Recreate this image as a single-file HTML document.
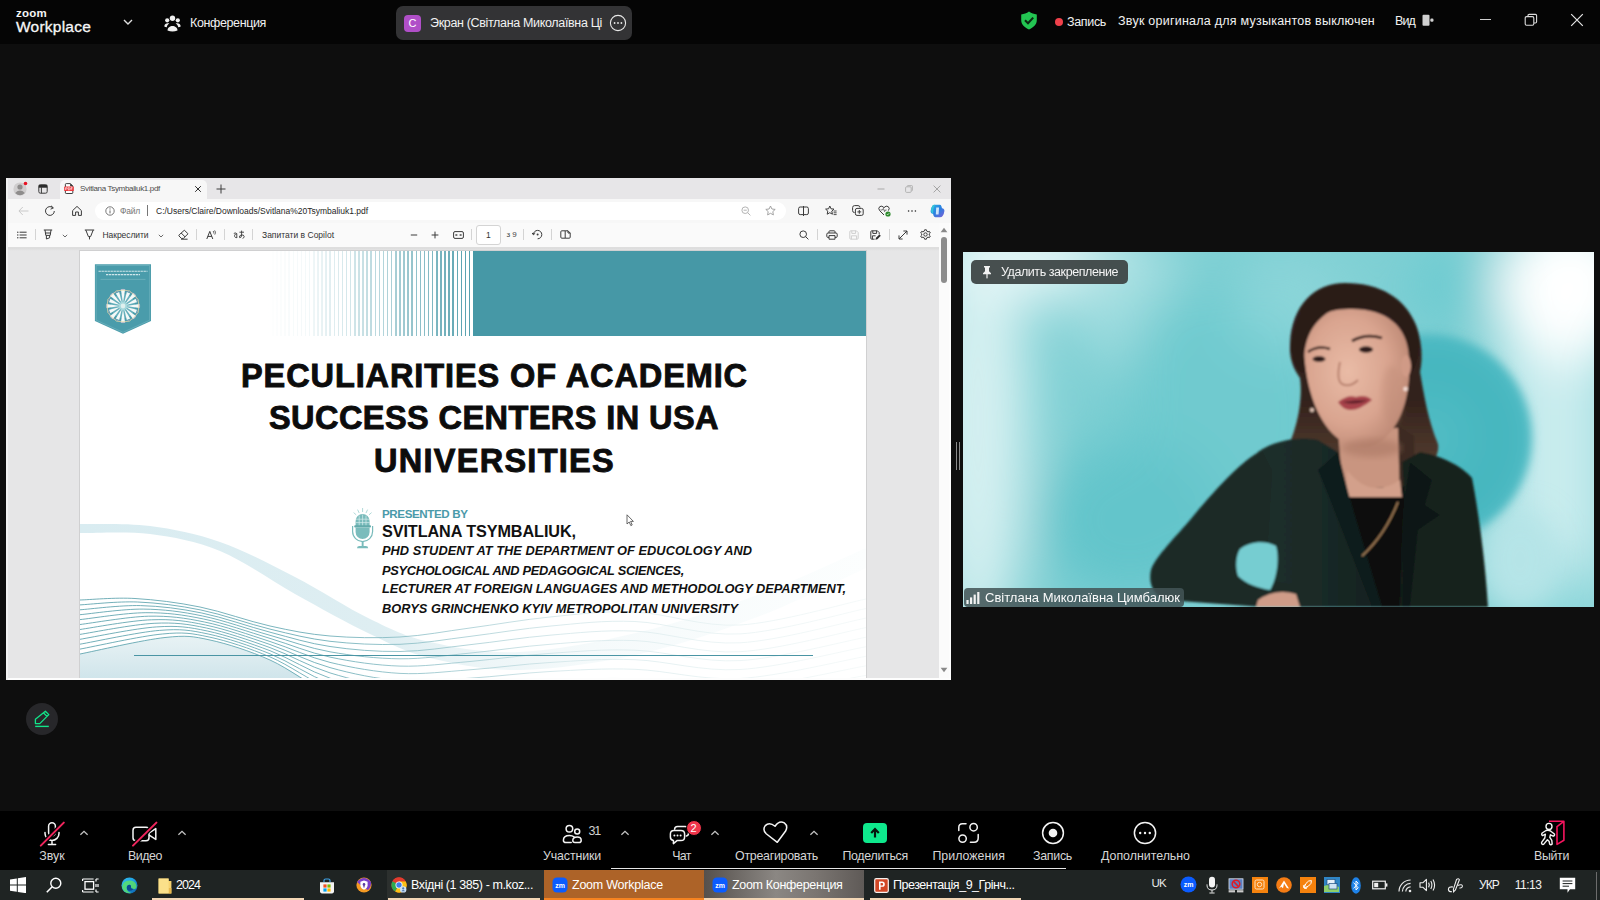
<!DOCTYPE html>
<html><head><meta charset="utf-8">
<style>
*{box-sizing:border-box;margin:0;padding:0}
html,body{width:1600px;height:900px;overflow:hidden;background:#0e0e0e;font-family:"Liberation Sans",sans-serif;color:#fff}
.abs{position:absolute}
#top{left:0;top:0;width:1600px;height:44px;background:#050505}
#top .t{position:absolute;font-size:12.5px;color:#f2f2f2;white-space:nowrap}
#tabpill{left:396px;top:6px;width:236px;height:34px;border-radius:7px;background:#333335}
#share{left:6px;top:178px;width:945px;height:502px;background:#e9e9ea;overflow:hidden}
#video{left:963px;top:252px;width:631px;height:355px;background:#7fd0d3;overflow:hidden}
#toolbar{left:0;top:811px;width:1600px;height:58px;background:#000}
#taskbar{left:0;top:869px;width:1600px;height:31px;background:#1f2423}
.lbl{position:absolute;font-size:12.4px;color:#d6d6d6;white-space:nowrap;transform:translateX(-50%);top:38px}
.tk{position:absolute;font-size:12.5px;color:#fff;white-space:nowrap;top:9px}
.bt{position:absolute;white-space:nowrap;letter-spacing:0}
.ttl{position:absolute;white-space:nowrap;font-size:32.5px;font-weight:bold;color:#0c0c0c;-webkit-text-stroke:0.9px #0c0c0c}
.bi{position:absolute;white-space:nowrap;font-size:12.8px;font-weight:bold;font-style:italic;color:#111}
</style></head><body>
<!--TOP-->
<div id="top" class="abs">
<div class="t" style="left:16px;top:6.6px;font-size:11.5px;font-weight:bold;color:#f5f5f5;letter-spacing:0.242px" id="zm">zoom</div>
<div class="t" style="left:16px;top:18px;font-size:15.5px;color:#f7f7f7;-webkit-text-stroke:0.3px #f7f7f7;letter-spacing:0.229px" id="wp">Workplace</div>
<svg class="abs" style="left:122px;top:17px" width="12" height="10" viewBox="0 0 12 10"><path d="M2 3 L6 7 L10 3" fill="none" stroke="#e0e0e0" stroke-width="1.4"/></svg>
<svg class="abs" style="left:164px;top:14px" width="17" height="18" viewBox="0 0 17 18"><g fill="#f0f0f0"><circle cx="8.5" cy="4.3" r="2.7"/><circle cx="3.2" cy="6.3" r="2.1"/><circle cx="13.8" cy="6.3" r="2.1"/><path d="M3.5 16.5 C3.5 10.5 13.5 10.5 13.5 16.5 Q8.5 18.3 3.5 16.5Z"/><path d="M0.3 12.6 C0.3 9 4 8.6 5.4 9.6 C3.6 10.6 2.9 12 2.8 13.3 Q1.2 13.3 0.3 12.6Z"/><path d="M16.7 12.6 C16.7 9 13 8.6 11.6 9.6 C13.4 10.6 14.1 12 14.2 13.3 Q15.8 13.3 16.7 12.6Z"/></g></svg>
<div class="t" style="left:190px;top:16px;letter-spacing:-0.372px" id="conf">Конференция</div>
<div id="tabpill" class="abs"></div>
<div class="abs" style="left:404px;top:15px;width:17px;height:17px;border-radius:4px;background:#b04fc8;color:#fff;font-size:11px;text-align:center;line-height:17px">C</div>
<div class="t" style="left:430px;top:16px;letter-spacing:-0.337px" id="ekr">Экран (Світлана Миколаївна Ці</div>
<svg class="abs" style="left:609px;top:14px" width="18" height="18" viewBox="0 0 18 18"><circle cx="9" cy="9" r="7.6" fill="none" stroke="#e8e8e8" stroke-width="1.1"/><circle cx="5.6" cy="9" r="0.9" fill="#e8e8e8"/><circle cx="9" cy="9" r="0.9" fill="#e8e8e8"/><circle cx="12.4" cy="9" r="0.9" fill="#e8e8e8"/></svg>
<svg class="abs" style="left:1020px;top:11px" width="18" height="19" viewBox="0 0 18 19"><path d="M9 0.6 C6.5 2.6 4 3.2 1.2 3.4 V9 C1.2 13.6 4.6 16.6 9 18.4 C13.4 16.6 16.8 13.6 16.8 9 V3.4 C14 3.2 11.5 2.6 9 0.6Z" fill="#23c552"/><path d="M5 9.2 L8 12.2 L13.2 6.6" fill="none" stroke="#0a2a12" stroke-width="2.1"/></svg>
<div class="abs" style="left:1055px;top:18px;width:8px;height:8px;border-radius:50%;background:#f0414b"></div>
<div class="t" style="left:1067px;top:15px;letter-spacing:-0.336px" id="zap">Запись</div>
<div class="t" style="left:1118px;top:14px;letter-spacing:0.240px" id="zvuk">Звук оригинала для музыкантов выключен</div>
<div class="t" style="left:1395px;top:14px;letter-spacing:-0.875px" id="vid">Вид</div>
<svg class="abs" style="left:1422px;top:13.5px" width="13" height="13" viewBox="0 0 13 13"><rect x="0.5" y="0.8" width="7" height="11" rx="1" fill="#d0d0d0"/><rect x="8.3" y="4.6" width="3.2" height="3.2" rx="1.2" fill="#d0d0d0"/></svg>
<div class="abs" style="left:1480px;top:19px;width:11px;height:1.4px;background:#cfcfcf"></div>
<svg class="abs" style="left:1524px;top:13px" width="14" height="14" viewBox="0 0 14 14"><rect x="1.2" y="3.6" width="8.6" height="8.6" rx="1.4" fill="none" stroke="#dcdcdc" stroke-width="1.1"/><path d="M4 3.4 V2.6 Q4 1.4 5.2 1.4 H11.4 Q12.6 1.4 12.6 2.6 V8.8 Q12.6 10 11.4 10 H10" fill="none" stroke="#dcdcdc" stroke-width="1.1"/></svg>
<svg class="abs" style="left:1570px;top:13px" width="14" height="14" viewBox="0 0 14 14"><path d="M1.2 1.2 L12.8 12.8 M12.8 1.2 L1.2 12.8" stroke="#e6e6e6" stroke-width="1.2"/></svg>
</div>
<!--SHARE-->
<div id="share" class="abs"><div class="abs" style="left:-6px;top:-178px;width:1600px;height:900px">
<div class="abs" style="left:6px;top:178px;width:945px;height:21px;background:#e7e6e8"></div>
<div class="abs" style="left:60px;top:180px;width:147px;height:19px;background:#f7f7f7;border-radius:5px 5px 0 0"></div>
<div class="abs" style="left:6px;top:199px;width:945px;height:24px;background:#f7f7f7"></div>
<div class="abs" style="left:95px;top:202px;width:691px;height:18px;background:#fff;border-radius:9px"></div>
<div class="abs" style="left:6px;top:223px;width:945px;height:25px;background:#fafafa;border-bottom:1px solid #dedede"></div>
<div class="abs" style="left:6px;top:248px;width:945px;height:432px;background:#e6e6e7"></div>
<div class="abs" style="left:6px;top:248px;width:934px;height:3px;background:linear-gradient(#dcdcdc,#e6e6e7)"></div>
<div class="bt" style="left:80px;top:184px;font-size:8px;color:#4c4c4c;letter-spacing:-0.329px" id="tabt">Svitlana Tsymbaliuk1.pdf</div>
<div class="bt" style="left:120px;top:205.5px;font-size:8.5px;color:#777;letter-spacing:-0.227px" id="fail">Файл</div>
<div class="abs" style="left:146.500px;top:205px;width:1px;height:11px;background:#777"></div>
<div class="bt" style="left:156px;top:205.5px;font-size:8.5px;color:#262626;letter-spacing:-0.011px" id="url">C:/Users/Claire/Downloads/Svitlana%20Tsymbaliuk1.pdf</div>
<div class="bt" style="left:102.5px;top:229.5px;font-size:8.5px;color:#333;letter-spacing:-0.064px" id="nakr">Накреслити</div>
<div class="bt" style="left:262px;top:229.5px;font-size:8.5px;color:#333;letter-spacing:0.006px" id="copi">Запитати в Copilot</div>
<div class="abs" style="left:476px;top:224.500px;width:25px;height:20px;background:#fff;border:1px solid #d4d4d4;border-radius:3px"></div>
<div class="bt" style="left:486px;top:229.5px;font-size:8.5px;color:#333">1</div>
<div class="bt" style="left:506.5px;top:230px;font-size:8px;color:#444;letter-spacing:-0.115px" id="z9">з 9</div>
<svg class="abs" style="left:12.5px;top:181.0px" width="15" height="15" viewBox="0 0 15 15" ><circle cx="7" cy="8" r="6.6" fill="#cfcdce"/><circle cx="7" cy="6" r="2.6" fill="#8e8c8c"/><path d="M2.2 12 Q7 7.2 11.8 12 Q7 16.4 2.2 12Z" fill="#8e8c8c"/><circle cx="12.5" cy="2.5" r="1.8" fill="#e81123"/></svg>
<svg class="abs" style="left:38.0px;top:183.5px" width="10" height="10" viewBox="0 0 10 10" ><rect x="0.8" y="0.8" width="8.4" height="8.4" rx="1.6" fill="none" stroke="#3b3b3b" stroke-width="1" stroke-width="1.2"/><path d="M0.8 3.2 H9.2 M3.4 3.2 V9.2" fill="none" stroke="#3b3b3b" stroke-width="1"/><rect x="0.8" y="0.8" width="8.4" height="2.4" fill="#2b2b2b"/></svg>
<svg class="abs" style="left:63.8px;top:183.4px" width="10" height="11" viewBox="0 0 10 11" ><path d="M1.4 1.4 Q1.4 0.6 2.2 0.6 H6.4 L8.8 3 V9.800 Q8.800 10.500 8 10.500 H2.200 Q1.400 10.500 1.400 9.800Z" fill="#fff" stroke="#2b2b2b" stroke-width="0.900"/><path d="M6.200 0.600 V3.200 H8.800Z" fill="#2b2b2b"/><rect x="0.200" y="3.600" width="9.600" height="4.400" rx="0.600" fill="#ee3a3f"/><path d="M1.600 7 V4.600 H2.600 Q3.300 4.600 3.300 5.300 Q3.300 5.900 2.600 5.900 H1.600 M4.300 4.600 V7 H5 Q6 7 6 5.800 Q6 4.600 5 4.600Z M7 7 V4.600 H8.600 M7 5.800 H8.300" fill="none" stroke="#fff" stroke-width="0.600"/></svg>
<svg class="abs" style="left:193.5px;top:184.5px" width="8" height="8" viewBox="0 0 8 8" ><path d="M1.2 1.2 L6.8 6.8 M6.8 1.2 L1.2 6.8" stroke="#2e2e2e" stroke-width="1"/></svg>
<svg class="abs" style="left:215.5px;top:183.5px" width="10" height="10" viewBox="0 0 10 10" ><path d="M5 0.5 V9.5 M0.5 5 H9.5" stroke="#3c3c3c" stroke-width="1"/></svg>
<svg class="abs" style="left:876.5px;top:184.5px" width="8" height="8" viewBox="0 0 8 8" ><path d="M0.5 4 H7.5" stroke="#a9a9a9" stroke-width="1"/></svg>
<svg class="abs" style="left:904.5px;top:184.5px" width="8" height="8" viewBox="0 0 8 8" ><rect x="0.6" y="1.8" width="5.6" height="5.6" rx="1" fill="none" stroke="#b4b4b4" stroke-width="1"/><path d="M2.2 1.6 V1.2 Q2.2 0.6 2.8 0.6 H6.8 Q7.4 0.6 7.4 1.2 V5.2 Q7.4 5.8 6.8 5.8 H6.4" fill="none" stroke="#b4b4b4" stroke-width="1"/></svg>
<svg class="abs" style="left:932.5px;top:184.5px" width="8" height="8" viewBox="0 0 8 8" ><path d="M0.6 0.6 L7.4 7.4 M7.4 0.6 L0.6 7.4" stroke="#a4a4a4" stroke-width="1"/></svg>
<svg class="abs" style="left:17.9px;top:205.5px" width="11" height="10" viewBox="0 0 11 10" ><path d="M10.5 5 H1 M4.8 1 L0.9 5 L4.8 9" fill="none" stroke="#c9c9c9" stroke-width="1"/></svg>
<svg class="abs" style="left:44.0px;top:204.5px" width="12" height="12" viewBox="0 0 12 12" ><path d="M10.3 6 A4.4 4.4 0 1 1 8.8 2.7" fill="none" stroke="#3b3b3b" stroke-width="1" stroke-width="1.1"/><path d="M7 0.8 L9.4 2.9 L6.6 4.2" fill="none" stroke="#3b3b3b" stroke-width="1" stroke-width="1.1"/></svg>
<svg class="abs" style="left:71.0px;top:204.5px" width="12" height="12" viewBox="0 0 12 12" ><path d="M1.6 5.6 L6 1.4 L10.4 5.6 V10.4 H7.4 V7 H4.6 V10.4 H1.6Z" fill="none" stroke="#3b3b3b" stroke-width="1" stroke-width="1.1" stroke-linejoin="round"/></svg>
<svg class="abs" style="left:105.0px;top:205.5px" width="10" height="10" viewBox="0 0 10 10" ><circle cx="5" cy="5" r="4.2" fill="none" stroke="#6a6a6a" stroke-width="0.9"/><path d="M5 4.4 V7.4" stroke="#6a6a6a" stroke-width="1"/><circle cx="5" cy="2.9" r="0.6" fill="#6a6a6a"/></svg>
<svg class="abs" style="left:741.0px;top:205.5px" width="10" height="10" viewBox="0 0 10 10" ><circle cx="4.2" cy="4.2" r="3.3" fill="none" stroke="#b4b4b4" stroke-width="1"/><path d="M6.6 6.6 L9.4 9.4 M2.6 4.2 H5.8" fill="none" stroke="#b4b4b4" stroke-width="1"/></svg>
<svg class="abs" style="left:765.0px;top:205.0px" width="11" height="11" viewBox="0 0 11 11" ><path d="M5.5 1 L6.9 4 L10.2 4.4 L7.8 6.6 L8.4 9.9 L5.5 8.3 L2.6 9.9 L3.2 6.6 L0.8 4.4 L4.1 4Z" fill="none" stroke="#9a9a9a" stroke-width="0.9" stroke-linejoin="round"/></svg>
<svg class="abs" style="left:797.5px;top:205.5px" width="11" height="10" viewBox="0 0 11 10" ><rect x="0.6" y="1" width="9.8" height="7.6" rx="1.6" fill="none" stroke="#3b3b3b" stroke-width="1"/><path d="M5.5 0 V10" fill="none" stroke="#3b3b3b" stroke-width="1"/></svg>
<svg class="abs" style="left:824.5px;top:205.0px" width="12" height="11" viewBox="0 0 12 11" ><path d="M4.8 1 L6 3.8 L9 4.1 L6.8 6.1 L7.4 9.2 L4.8 7.7 L2.2 9.2 L2.8 6.1 L0.6 4.1 L3.6 3.8Z" fill="none" stroke="#3b3b3b" stroke-width="1" stroke-linejoin="round"/><path d="M8.6 6 H11.6 M8.6 7.8 H11.6 M8.6 9.6 H11.6" stroke="#3b3b3b" stroke-width="0.9"/></svg>
<svg class="abs" style="left:851.5px;top:205.0px" width="12" height="11" viewBox="0 0 12 11" ><path d="M2.6 7.6 Q0.6 7.6 0.6 5.6 V2.6 Q0.6 0.6 2.6 0.6 H6 Q8 0.6 8 2.6" fill="none" stroke="#3b3b3b" stroke-width="1"/><rect x="3.4" y="3.4" width="7.8" height="7" rx="1.6" fill="none" stroke="#3b3b3b" stroke-width="1"/><path d="M7.3 5 V8.8 M5.4 6.9 H9.2" fill="none" stroke="#3b3b3b" stroke-width="1"/></svg>
<svg class="abs" style="left:878.0px;top:204.5px" width="13" height="12" viewBox="0 0 13 12" ><path d="M6 10 L1.6 5.6 Q-0.2 3.2 1.8 1.6 Q3.8 0.2 6 2.6 Q8.2 0.2 10.2 1.6 Q12.2 3.2 10.4 5.6" fill="none" stroke="#3b3b3b" stroke-width="1"/><path d="M2.4 5 H4.4 L5.4 3.4 L6.6 6.6 L7.4 5 H8.6" fill="none" stroke="#3b3b3b" stroke-width="0.7"/><circle cx="10" cy="9" r="2.6" fill="#2e8b2e"/><path d="M8.8 9 L9.7 9.9 L11.2 8.2" fill="none" stroke="#fff" stroke-width="0.7"/></svg>
<svg class="abs" style="left:906.5px;top:208.5px" width="10" height="4" viewBox="0 0 10 4" ><circle cx="1.6" cy="2" r="0.8" fill="#222"/><circle cx="5" cy="2" r="0.8" fill="#222"/><circle cx="8.4" cy="2" r="0.8" fill="#222"/></svg>
<svg class="abs" style="left:930.0px;top:203.5px" width="15" height="14" viewBox="0 0 15 14" ><defs><linearGradient id="cp1" x1="0" y1="0" x2="1" y2="1"><stop offset="0" stop-color="#2bb5e8"/><stop offset="0.5" stop-color="#2a7fe0"/><stop offset="1" stop-color="#7b5fd6"/></linearGradient></defs><path d="M5 0.8 H9.6 Q11 0.8 11.4 2.2 L12 4.2 Q14.6 4.6 14.4 7 Q14 10.6 12.6 12 Q11.8 13.2 10 13.2 H5.4 Q4 13.2 3.6 11.8 L3 9.8 Q0.4 9.4 0.6 7 Q1 3.4 2.4 2 Q3.2 0.8 5 0.8Z" fill="url(#cp1)"/><path d="M6.2 3.4 H9 L8.6 10.6 H5.8Z" fill="#eaf6ff" opacity="0.85"/><path d="M3 9.8 Q2.6 5 5 0.8 H4 Q2.2 0.9 1.6 3.6 Q0.2 9 3 9.8Z" fill="#35c3d9"/></svg>
<svg class="abs" style="left:16.6px;top:230.5px" width="10" height="8" viewBox="0 0 10 8" ><path d="M2.6 1.2 H9.6 M2.6 4 H9.6 M2.6 6.8 H9.6" stroke="#3b3b3b" stroke-width="1"/><circle cx="0.8" cy="1.2" r="0.7" fill="#3b3b3b"/><circle cx="0.8" cy="4" r="0.7" fill="#3b3b3b"/><circle cx="0.8" cy="6.8" r="0.7" fill="#3b3b3b"/></svg>
<svg class="abs" style="left:43.0px;top:229.0px" width="10" height="11" viewBox="0 0 10 11" ><path d="M0.8 1 H9.2 M2 1 L2.8 6.4 H7.2 L8 1 M2.6 4 H7.4 M3.4 6.4 V10 L6.6 8.8 V6.4" fill="none" stroke="#3b3b3b" stroke-width="1" stroke-linejoin="round"/></svg>
<svg class="abs" style="left:61.5px;top:233.5px" width="6" height="4" viewBox="0 0 6 4" ><path d="M0.8 0.8 L3 3 L5.2 0.8" fill="none" stroke="#5a5a5a" stroke-width="0.9"/></svg>
<svg class="abs" style="left:84.0px;top:229.0px" width="11" height="11" viewBox="0 0 11 11" ><path d="M0.8 1 H10.2 M1.8 1 L4.4 7.6 H6.6 L9.2 1 M5.5 7.6 V10.4" fill="none" stroke="#3b3b3b" stroke-width="1" stroke-linejoin="round"/></svg>
<svg class="abs" style="left:157.5px;top:233.5px" width="6" height="4" viewBox="0 0 6 4" ><path d="M0.8 0.8 L3 3 L5.2 0.8" fill="none" stroke="#5a5a5a" stroke-width="0.9"/></svg>
<svg class="abs" style="left:177.5px;top:229.0px" width="11" height="11" viewBox="0 0 11 11" ><path d="M6.4 1.2 L10 4.8 L5.4 9.4 H3.4 L1 7 Q0.6 6.4 1.2 5.8Z M3.2 4 L7.2 8 M3 10.2 H9.6" fill="none" stroke="#3b3b3b" stroke-width="1" stroke-linejoin="round"/></svg>
<svg class="abs" style="left:206.0px;top:229.5px" width="10" height="10" viewBox="0 0 10 10" ><path d="M0.8 9 L3.8 1.4 L6.8 9 M1.8 6.4 H5.8" fill="none" stroke="#3b3b3b" stroke-width="1"/><path d="M7 1 Q8.4 2 7.6 3.4 M8.6 0.4 Q10.4 2.2 8.8 4.6" fill="none" stroke="#3b3b3b" stroke-width="0.8"/></svg>
<svg class="abs" style="left:232.5px;top:230.0px" width="12" height="9" viewBox="0 0 12 9" ><path d="M3.8 4 A1.7 1.9 0 1 0 3.8 7.6 M3.8 3.6 V8 M0.8 3.4 Q2.6 2.4 3.8 3.6" fill="none" stroke="#3b3b3b" stroke-width="0.9"/><path d="M6.4 2.2 H11 M8.6 0.6 V5 Q8.6 8 6.6 7.6 Q5.6 6 8 5 Q11 4.4 11.2 6.6 Q11 8 9.6 8.4" fill="none" stroke="#3b3b3b" stroke-width="0.9"/></svg>
<svg class="abs" style="left:409.5px;top:232.5px" width="8" height="4" viewBox="0 0 8 4" ><path d="M0.8 2 H7.2" stroke="#3b3b3b" stroke-width="1"/></svg>
<svg class="abs" style="left:431.0px;top:230.5px" width="8" height="8" viewBox="0 0 8 8" ><path d="M0.6 4 H7.4 M4 0.6 V7.4" stroke="#3b3b3b" stroke-width="1"/></svg>
<svg class="abs" style="left:452.5px;top:230.5px" width="11" height="8" viewBox="0 0 11 8" ><rect x="0.6" y="0.6" width="9.8" height="6.8" rx="1.4" fill="none" stroke="#3b3b3b" stroke-width="1"/><path d="M2.6 4 H4.6 M6.4 4 H8.4 M3.6 3 L2.6 4 L3.6 5 M7.4 3 L8.4 4 L7.4 5" fill="none" stroke="#3b3b3b" stroke-width="0.8"/></svg>
<svg class="abs" style="left:531.5px;top:229.0px" width="11" height="11" viewBox="0 0 11 11" ><path d="M1.4 5.6 A4.2 4.2 0 1 1 5.6 9.8" fill="none" stroke="#3b3b3b" stroke-width="1"/><path d="M0 3.8 L1.4 5.8 L3.2 4.2" fill="none" stroke="#3b3b3b" stroke-width="1"/><circle cx="5.6" cy="5.6" r="1" fill="#3b3b3b"/></svg>
<svg class="abs" style="left:559.5px;top:230.0px" width="11" height="9" viewBox="0 0 11 9" ><path d="M0.8 1.8 Q0.8 0.8 1.8 0.8 H5.2 V8.2 H1.8 Q0.8 8.2 0.8 7.2Z M5.2 0.8 H8 L10.2 3 V7.2 Q10.2 8.2 9.2 8.2 H5.2 M8 0.8 V3 H10.2" fill="none" stroke="#3b3b3b" stroke-width="1" stroke-linejoin="round"/></svg>
<svg class="abs" style="left:799.0px;top:229.5px" width="10" height="10" viewBox="0 0 10 10" ><circle cx="4.2" cy="4.2" r="3.3" fill="none" stroke="#3b3b3b" stroke-width="1"/><path d="M6.6 6.6 L9.4 9.4" fill="none" stroke="#3b3b3b" stroke-width="1" stroke-width="1.2"/></svg>
<svg class="abs" style="left:825.6px;top:229.5px" width="12" height="10" viewBox="0 0 12 10" ><path d="M3 3 V1.6 Q3 0.8 3.8 0.8 H8.2 Q9 0.8 9 1.6 V3 M3 7.4 H1.8 Q0.8 7.4 0.8 6.4 V4.2 Q0.8 3 2 3 H10 Q11.2 3 11.2 4.2 V6.4 Q11.2 7.4 10.2 7.4 H9 M3 5.6 H9 V9.2 H3Z" fill="none" stroke="#3b3b3b" stroke-width="1" stroke-linejoin="round"/></svg>
<svg class="abs" style="left:848.5px;top:229.5px" width="10" height="10" viewBox="0 0 10 10" ><path d="M0.8 1.8 Q0.8 0.8 1.8 0.8 H7.4 L9.2 2.6 V8.2 Q9.2 9.2 8.2 9.2 H1.8 Q0.8 9.2 0.8 8.2Z M2.8 0.8 V3.4 H6.6 V0.8 M2.4 9.2 V5.8 H7.6 V9.2" fill="none" stroke="#cfcfcf" stroke-width="1" stroke-linejoin="round"/></svg>
<svg class="abs" style="left:870.0px;top:229.5px" width="11" height="10" viewBox="0 0 11 10" ><path d="M0.8 1.8 Q0.8 0.8 1.8 0.8 H7.4 L9.2 2.6 V4.4 M4.6 9.2 H1.8 Q0.8 9.2 0.8 8.2 V1.8 M2.8 0.8 V3.4 H6.6 V0.8 M2.4 9.2 V5.8 H5.6" fill="none" stroke="#3b3b3b" stroke-width="1" stroke-linejoin="round"/><path d="M5.4 9.8 L6 7.8 L9.4 4.4 L10.8 5.8 L7.4 9.2Z" fill="#2b2b2b"/></svg>
<svg class="abs" style="left:898.0px;top:229.5px" width="10" height="10" viewBox="0 0 10 10" ><path d="M1 9 L9 1 M5.4 1 H9 V4.6 M1 5.4 V9 H4.6" fill="none" stroke="#3b3b3b" stroke-width="1"/></svg>
<svg class="abs" style="left:920.0px;top:229.0px" width="11" height="11" viewBox="0 0 11 11" ><circle cx="5.5" cy="5.5" r="1.7" fill="none" stroke="#3b3b3b" stroke-width="1"/><path d="M4.6 0.8 H6.4 L6.8 2.2 L8 2.9 L9.4 2.4 L10.3 4 L9.2 5 V6 L10.3 7 L9.4 8.6 L8 8.1 L6.8 8.8 L6.4 10.2 H4.6 L4.2 8.8 L3 8.1 L1.6 8.6 L0.7 7 L1.8 6 V5 L0.7 4 L1.6 2.4 L3 2.9 L4.2 2.2Z" fill="none" stroke="#3b3b3b" stroke-width="1" stroke-linejoin="round" stroke-width="0.9"/></svg>

<div class="abs" style="left:34.5px;top:229px;width:1px;height:11px;background:#d4d4d4"></div><div class="abs" style="left:195.5px;top:229px;width:1px;height:11px;background:#d4d4d4"></div><div class="abs" style="left:223.5px;top:229px;width:1px;height:11px;background:#d4d4d4"></div><div class="abs" style="left:252.0px;top:229px;width:1px;height:11px;background:#d4d4d4"></div><div class="abs" style="left:470.5px;top:229px;width:1px;height:11px;background:#d4d4d4"></div><div class="abs" style="left:522.5px;top:229px;width:1px;height:11px;background:#d4d4d4"></div><div class="abs" style="left:550.5px;top:229px;width:1px;height:11px;background:#d4d4d4"></div><div class="abs" style="left:816.5px;top:229px;width:1px;height:11px;background:#d4d4d4"></div><div class="abs" style="left:888.5px;top:229px;width:1px;height:11px;background:#d4d4d4"></div>
<!--SLIDE-->
<div class="abs" style="left:79px;top:250px;width:788px;height:431px;background:#d0d0d1"></div>
<div class="abs" style="left:80px;top:251px;width:786px;height:429px;background:#fff"></div>
<div class="abs" style="left:473px;top:251px;width:393px;height:84.5px;background:#4698a6"></div>
<div class="abs" style="left:268px;top:251px;width:205px;height:84.5px;background:repeating-linear-gradient(90deg,#4f9dab 0,#4f9dab 1.5px,#fff 1.5px,#fff 4.1px);background-position:right top"></div>
<div class="abs" style="left:268px;top:251px;width:205px;height:84.5px;background:linear-gradient(90deg,#fff 0,rgba(255,255,255,0.93) 20%,rgba(255,255,255,0.7) 45%,rgba(255,255,255,0.35) 75%,rgba(255,255,255,0.02) 100%)"></div>
<svg class="abs" style="left:80px;top:480px" width="786" height="200" viewBox="80 480 786 200">
<defs>
<linearGradient id="wg" gradientUnits="userSpaceOnUse" x1="80" y1="0" x2="866" y2="0"><stop offset="0" stop-color="#4e9aa6"/><stop offset="0.3" stop-color="#5aa3ae"/><stop offset="0.5" stop-color="#a4ccd2"/><stop offset="0.62" stop-color="#d3e6e9"/><stop offset="0.8" stop-color="#e6f1f2"/><stop offset="1" stop-color="#f3f8f8"/></linearGradient>
<linearGradient id="bg1" gradientUnits="userSpaceOnUse" x1="80" y1="0" x2="866" y2="0"><stop offset="0" stop-color="#d9ecf1"/><stop offset="0.38" stop-color="#deeef2"/><stop offset="0.5" stop-color="#ecf5f7"/><stop offset="0.65" stop-color="#f5fafb"/><stop offset="1" stop-color="#fcfefe"/></linearGradient>
<linearGradient id="bg2" gradientUnits="userSpaceOnUse" x1="0" y1="635" x2="0" y2="690"><stop offset="0" stop-color="#e9f3f5"/><stop offset="1" stop-color="#c9e1e8"/></linearGradient>
</defs>
<path d="M80.0 524.0 C91.7 524.3 126.7 523.0 150.0 526.0 C173.3 529.0 195.8 533.5 220.0 542.0 C244.2 550.5 270.0 564.2 295.0 577.0 C320.0 589.8 347.5 608.2 370.0 619.0 C392.5 629.8 405.0 636.5 430.0 642.0 C455.0 647.5 485.0 653.7 520.0 652.0 C555.0 650.3 600.0 641.7 640.0 632.0 C680.0 622.3 722.3 608.0 760.0 594.0 C797.7 580.0 848.3 555.7 866.0 548.0 L866.0 568.0 C848.3 576.0 797.7 601.7 760.0 616.0 C722.3 630.3 680.0 645.0 640.0 654.0 C600.0 663.0 555.0 669.3 520.0 670.0 C485.0 670.7 455.0 664.0 430.0 658.0 C405.0 652.0 392.5 644.7 370.0 634.0 C347.5 623.3 320.0 607.8 295.0 594.0 C270.0 580.2 244.2 561.0 220.0 551.0 C195.8 541.0 173.3 537.0 150.0 534.0 C126.7 531.0 91.7 533.2 80.0 533.0 Z" fill="url(#bg1)"/>
<path d="M80.0 654.0 C94.2 651.2 143.3 639.8 165.0 637.5 C186.7 635.2 192.5 636.2 210.0 640.0 C227.5 643.8 250.0 650.8 270.0 660.0 C290.0 669.2 320.0 689.2 330.0 695.0 L80 695 Z" fill="url(#bg2)"/>
<path d="M80.0 600.0 C89.2 599.8 115.0 597.3 135.0 598.5 C155.0 599.7 177.5 602.4 200.0 607.0 C222.5 611.6 248.3 621.2 270.0 626.0 C291.7 630.8 308.3 634.2 330.0 636.0 C351.7 637.8 376.7 638.3 400.0 637.0 C423.3 635.7 445.0 631.3 470.0 628.0 C495.0 624.7 522.5 619.7 550.0 617.0 C577.5 614.3 603.3 610.7 635.0 612.0 C666.7 613.3 701.5 627.2 740.0 625.0 C778.5 622.8 845.0 603.3 866.0 599.0" fill="none" stroke="url(#wg)" stroke-width="0.8"/>
<path d="M80.0 604.9 C89.6 604.4 117.6 601.2 137.7 602.0 C157.9 602.9 178.9 605.5 200.9 610.0 C223.0 614.5 248.5 623.9 270.0 629.1 C291.5 634.3 308.3 638.7 330.0 641.3 C351.7 643.8 376.7 645.1 400.0 644.3 C423.3 643.5 445.0 639.4 470.0 636.4 C495.0 633.3 522.5 628.6 550.0 626.1 C577.5 623.6 603.3 620.2 635.0 621.5 C666.7 622.8 701.5 636.1 740.0 633.9 C778.5 631.7 845.0 612.8 866.0 608.5" fill="none" stroke="url(#wg)" stroke-width="0.8"/>
<path d="M80.0 609.8 C90.1 609.1 120.2 605.1 140.5 605.6 C160.8 606.1 180.2 608.6 201.8 613.0 C223.4 617.4 248.6 626.6 270.0 632.2 C291.4 637.8 308.3 643.3 330.0 646.5 C351.7 649.8 376.7 651.8 400.0 651.5 C423.3 651.2 445.0 647.5 470.0 644.7 C495.0 642.0 522.5 637.5 550.0 635.2 C577.5 632.9 603.3 629.8 635.0 631.1 C666.7 632.4 701.5 645.0 740.0 642.8 C778.5 640.7 845.0 622.2 866.0 618.1" fill="none" stroke="url(#wg)" stroke-width="0.8"/>
<path d="M80.0 614.7 C90.5 613.8 122.7 608.9 143.2 609.1 C163.6 609.3 181.6 611.6 202.7 616.0 C223.9 620.4 248.8 629.3 270.0 635.3 C291.2 641.2 308.3 647.9 330.0 651.8 C351.7 655.7 376.7 658.6 400.0 658.8 C423.3 659.0 445.0 655.5 470.0 653.1 C495.0 650.7 522.5 646.3 550.0 644.3 C577.5 642.2 603.3 639.4 635.0 640.6 C666.7 641.9 701.5 653.9 740.0 651.7 C778.5 649.6 845.0 631.7 866.0 627.6" fill="none" stroke="url(#wg)" stroke-width="0.8"/>
<path d="M80.0 619.6 C91.0 618.5 125.3 612.8 145.9 612.7 C166.5 612.6 183.0 614.7 203.6 619.0 C224.3 623.3 248.9 632.0 270.0 638.4 C291.1 644.7 308.3 652.5 330.0 657.1 C351.7 661.7 376.7 665.4 400.0 666.1 C423.3 666.8 445.0 663.6 470.0 661.5 C495.0 659.3 522.5 655.2 550.0 653.4 C577.5 651.5 603.3 649.0 635.0 650.2 C666.7 651.4 701.5 662.8 740.0 660.6 C778.5 658.5 845.0 641.1 866.0 637.2" fill="none" stroke="url(#wg)" stroke-width="0.8"/>
<path d="M80.0 624.5 C91.4 623.2 127.9 616.7 148.6 616.2 C169.4 615.8 184.3 617.8 204.5 622.0 C224.8 626.2 249.1 634.7 270.0 641.5 C290.9 648.2 308.3 657.0 330.0 662.4 C351.7 667.7 376.7 672.1 400.0 673.4 C423.3 674.6 445.0 671.6 470.0 669.8 C495.0 668.0 522.5 664.1 550.0 662.5 C577.5 660.8 603.3 658.5 635.0 659.7 C666.7 660.9 701.5 671.7 740.0 669.5 C778.5 667.4 845.0 650.5 866.0 646.7" fill="none" stroke="url(#wg)" stroke-width="0.8"/>
<path d="M80.0 629.5 C91.9 627.8 130.5 620.5 151.4 619.8 C172.3 619.0 185.7 620.9 205.5 625.0 C225.2 629.1 249.2 637.4 270.0 644.5 C290.8 651.7 308.3 661.6 330.0 667.6 C351.7 673.7 376.7 678.9 400.0 680.6 C423.3 682.4 445.0 679.7 470.0 678.2 C495.0 676.7 522.5 673.0 550.0 671.5 C577.5 670.1 603.3 668.1 635.0 669.3 C666.7 670.4 701.5 680.6 740.0 678.5 C778.5 676.3 845.0 660.0 866.0 656.3" fill="none" stroke="url(#wg)" stroke-width="0.8"/>
<path d="M80.0 634.4 C92.3 632.5 133.0 624.4 154.1 623.3 C175.2 622.3 187.0 623.9 206.4 628.0 C225.7 632.1 249.4 640.2 270.0 647.6 C290.6 655.1 308.3 666.2 330.0 672.9 C351.7 679.6 376.7 685.6 400.0 687.9 C423.3 690.2 445.0 687.8 470.0 686.5 C495.0 685.3 522.5 681.9 550.0 680.6 C577.5 679.3 603.3 677.7 635.0 678.8 C666.7 679.9 701.5 689.5 740.0 687.4 C778.5 685.2 845.0 669.4 866.0 665.8" fill="none" stroke="url(#wg)" stroke-width="0.8"/>
<path d="M80.0 639.3 C92.8 637.2 135.6 628.2 156.8 626.9 C178.0 625.5 188.4 627.0 207.3 631.0 C226.1 635.0 249.5 642.9 270.0 650.7 C290.5 658.6 308.3 670.8 330.0 678.2 C351.7 685.6 376.7 692.4 400.0 695.2 C423.3 698.0 445.0 695.8 470.0 694.9 C495.0 694.0 522.5 690.8 550.0 689.7 C577.5 688.6 603.3 687.3 635.0 688.4 C666.7 689.5 701.5 698.4 740.0 696.3 C778.5 694.1 845.0 678.8 866.0 675.4" fill="none" stroke="url(#wg)" stroke-width="0.8"/>
<path d="M80.0 644.2 C93.3 641.9 138.2 632.1 159.5 630.4 C180.9 628.7 189.8 630.1 208.2 634.0 C226.6 637.9 249.7 645.6 270.0 653.8 C290.3 662.1 308.3 675.3 330.0 683.5 C351.7 691.6 376.7 699.2 400.0 702.5 C423.3 705.8 445.0 703.9 470.0 703.3 C495.0 702.7 522.5 699.7 550.0 698.8 C577.5 697.9 603.3 696.8 635.0 697.9 C666.7 699.0 701.5 707.3 740.0 705.2 C778.5 703.0 845.0 688.3 866.0 684.9" fill="none" stroke="url(#wg)" stroke-width="0.8"/>
<path d="M80.0 649.1 C93.7 646.6 140.8 636.0 162.3 634.0 C183.8 631.9 191.1 633.2 209.1 637.0 C227.0 640.8 249.8 648.3 270.0 656.9 C290.2 665.5 308.3 679.9 330.0 688.7 C351.7 697.5 376.7 705.9 400.0 709.7 C423.3 713.5 445.0 711.9 470.0 711.6 C495.0 711.3 522.5 708.6 550.0 707.9 C577.5 707.2 603.3 706.4 635.0 707.5 C666.7 708.5 701.5 716.3 740.0 714.1 C778.5 711.9 845.0 697.7 866.0 694.5" fill="none" stroke="url(#wg)" stroke-width="0.8"/>
<path d="M80.0 654.0 C94.2 651.2 143.3 639.8 165.0 637.5 C186.7 635.2 192.5 636.2 210.0 640.0 C227.5 643.8 250.0 651.0 270.0 660.0 C290.0 669.0 308.3 684.5 330.0 694.0 C351.7 703.5 376.7 712.7 400.0 717.0 C423.3 721.3 445.0 720.0 470.0 720.0 C495.0 720.0 522.5 717.5 550.0 717.0 C577.5 716.5 603.3 716.0 635.0 717.0 C666.7 718.0 701.5 725.2 740.0 723.0 C778.5 720.8 845.0 707.2 866.0 704.0" fill="none" stroke="url(#wg)" stroke-width="0.8"/>

<path d="M134 655.5 H813" stroke="#4a95a4" stroke-width="1.2"/>
</svg>
<!--EMBLEM-->
<svg class="abs" style="left:93px;top:263px" width="60" height="72" viewBox="93 263 60 72">
<path d="M94.900 264.200 H151 V321 L123 333.800 L94.900 321Z" fill="#4a9cab"/>
<path d="M96.200 265.500 H149.700 V320.200 L123 332.300 L96.200 320.200Z" fill="none" stroke="#7fbcc6" stroke-width="0.500"/>
<path d="M98.500 271.300 H147.500 M106 274.600 H140" stroke="#cfe6ea" stroke-width="1.100" stroke-dasharray="2.400 0.600"/>
<path d="M100.500 279.400 H145.500" stroke="#86c0c9" stroke-width="0.500"/>
<circle cx="123" cy="306" r="12" fill="#7cc0c8" opacity="0.55"/>
<path d="M123.0 303.0 L120.9 289.6 L125.1 289.6Z" fill="#f4f9f8"/><path d="M124.1 303.2 L126.8 292.0 L130.2 293.4Z" fill="#f4f9f8"/><path d="M125.1 303.9 L133.1 293.0 L136.0 295.9Z" fill="#f4f9f8"/><path d="M125.8 304.9 L135.6 298.8 L137.0 302.2Z" fill="#f4f9f8"/><path d="M126.0 306.0 L139.4 303.9 L139.4 308.1Z" fill="#f4f9f8"/><path d="M125.8 307.1 L137.0 309.8 L135.6 313.2Z" fill="#f4f9f8"/><path d="M125.1 308.1 L136.0 316.1 L133.1 319.0Z" fill="#f4f9f8"/><path d="M124.1 308.8 L130.2 318.6 L126.8 320.0Z" fill="#f4f9f8"/><path d="M123.0 309.0 L125.1 322.4 L120.9 322.4Z" fill="#f4f9f8"/><path d="M121.9 308.8 L119.2 320.0 L115.8 318.6Z" fill="#f4f9f8"/><path d="M120.9 308.1 L112.9 319.0 L110.0 316.1Z" fill="#f4f9f8"/><path d="M120.2 307.1 L110.4 313.2 L109.0 309.8Z" fill="#f4f9f8"/><path d="M120.0 306.0 L106.6 308.1 L106.6 303.9Z" fill="#f4f9f8"/><path d="M120.2 304.9 L109.0 302.2 L110.4 298.8Z" fill="#f4f9f8"/><path d="M120.9 303.9 L110.0 295.9 L112.9 293.0Z" fill="#f4f9f8"/><path d="M121.9 303.2 L115.8 293.4 L119.2 292.0Z" fill="#f4f9f8"/>
<path d="M123.0 289.2 L134.9 294.1 L139.8 306.0 L134.9 317.9 L123.0 322.8 L111.1 317.9 L106.2 306.0 L111.1 294.1 Z" fill="none" stroke="#d9b4c9" stroke-width="0.7" opacity="0.8"/><path d="M129.4 290.5 L138.5 299.6 L138.5 312.4 L129.4 321.5 L116.6 321.5 L107.5 312.4 L107.5 299.6 L116.6 290.5 Z" fill="none" stroke="#e6dca0" stroke-width="0.7" opacity="0.8"/>
<circle cx="123" cy="306" r="4.400" fill="#a5d8dc"/><circle cx="123" cy="306" r="2.400" fill="#dff0ee"/>
</svg>
<!--TITLE-->
<div class="ttl" style="left:241px;top:357.5px;letter-spacing:0.899px" id="t1">PECULIARITIES OF ACADEMIC</div>
<div class="ttl" style="left:269px;top:400.2px;letter-spacing:0.426px" id="t2">SUCCESS CENTERS IN USA</div>
<div class="ttl" style="left:374px;top:442.9px;letter-spacing:1.271px" id="t3">UNIVERSITIES</div>
<div class="bt" style="left:382px;top:506.9px;font-size:11.6px;font-weight:bold;color:#4a9aaa;letter-spacing:-0.392px" id="pb">PRESENTED BY</div>
<div class="bt" style="left:382px;top:522.3px;font-size:16.2px;font-weight:bold;color:#111;letter-spacing:-0.073px" id="st">SVITLANA TSYMBALIUK,</div>
<div class="bi" style="left:382px;top:543.3px;letter-spacing:0.032px" id="l1">PHD STUDENT AT THE DEPARTMENT OF EDUCOLOGY AND</div>
<div class="bi" style="left:382px;top:562.7px;letter-spacing:-0.290px" id="l2">PSYCHOLOGICAL AND PEDAGOGICAL SCIENCES,</div>
<div class="bi" style="left:382px;top:581.4px;letter-spacing:-0.029px" id="l3">LECTURER AT FOREIGN LANGUAGES AND METHODOLOGY DEPARTMENT,</div>
<div class="bi" style="left:382px;top:600.8px;letter-spacing:0.022px" id="l4">BORYS GRINCHENKO KYIV METROPOLITAN UNIVERSITY</div>
<!--MIC-->
<svg class="abs" style="left:350px;top:506px" width="26" height="44" viewBox="350 506 26 44">
<g stroke="#9ccfce" stroke-width="0.8"><path d="M362.6 508 V512 M357.6 509.6 L359.2 513 M367.6 509.6 L366 513 M353.6 512.6 L356.2 514.8 M371.6 512.6 L369 514.8"/></g>
<path d="M355.6 521 A7 7 0 0 1 369.6 521 V526.2 H355.6Z" fill="#79bbbb"/>
<path d="M362.6 514.6 V526 M359.2 515.6 V526 M366 515.6 V526 M355.6 519.2 H369.6 M355.6 522.6 H369.6" stroke="#d9eeee" stroke-width="0.7"/>
<rect x="354.2" y="525.2" width="16.8" height="2.4" rx="1" fill="#63abab"/>
<path d="M355.6 527.6 H369.6 V532 A7 7 0 0 1 355.6 532Z" fill="#7abcbc"/>
<path d="M352.6 526 V531.6 A10 10 0 0 0 372.6 531.6 V526" fill="none" stroke="#79bbbb" stroke-width="1.2"/>
<rect x="361.7" y="541" width="1.9" height="5.6" fill="#79bbbb"/>
<path d="M357 548.2 Q357 546 359.4 546 H365.8 Q368.2 546 368.2 548.2Z" fill="#79bbbb"/>
</svg>
<!--CURSOR-->
<svg class="abs" style="left:626px;top:514px" width="9" height="13" viewBox="0 0 9 13"><path d="M1 0.8 V10 L3.2 8 L4.8 11.6 L6.2 11 L4.6 7.4 H7.4Z" fill="#fff" stroke="#444" stroke-width="0.8" stroke-linejoin="round"/></svg>
<!--SCROLL-->
<div class="abs" style="left:939px;top:223px;width:10px;height:455px;background:#fbfbfb"></div>
<div class="abs" style="left:941px;top:237px;width:5.5px;height:46px;background:#8d8d8d;border-radius:3px"></div>
<svg class="abs" style="left:940px;top:227px" width="8" height="6" viewBox="0 0 8 6"><path d="M0.6 5.2 L4 0.8 L7.4 5.2Z" fill="#8a8a8a"/></svg>
<svg class="abs" style="left:940px;top:667px" width="8" height="6" viewBox="0 0 8 6"><path d="M0.6 0.8 L4 5.2 L7.4 0.8Z" fill="#8a8a8a"/></svg>
<div class="abs" style="left:6px;top:678px;width:945px;height:2px;background:#fdfdfd"></div>
<div class="abs" style="left:949px;top:223px;width:2px;height:457px;background:#fdfdfd"></div>
<div class="abs" style="left:6px;top:178px;width:1.5px;height:502px;background:#f2f2f2"></div>
</div></div>
<!--VIDEO-->
<div id="video" class="abs">
<svg class="abs" style="left:0;top:0" width="631" height="355" viewBox="963 252 631 355">
<defs>
<filter id="b1" x="-10%" y="-10%" width="120%" height="120%"><feGaussianBlur stdDeviation="1.1"/></filter>
<filter id="b3" x="-20%" y="-20%" width="140%" height="140%"><feGaussianBlur stdDeviation="3"/></filter>
<filter id="b5" x="-20%" y="-20%" width="140%" height="140%"><feGaussianBlur stdDeviation="5"/></filter>
<radialGradient id="disc" cx="0.5" cy="0.5" r="0.5"><stop offset="0" stop-color="#52bcc4"/><stop offset="0.7" stop-color="#45b6bf"/><stop offset="1" stop-color="#4fbac3"/></radialGradient>
<filter id="b12" x="-30%" y="-30%" width="160%" height="160%"><feGaussianBlur stdDeviation="14"/></filter>
<filter id="b25" x="-40%" y="-40%" width="180%" height="180%"><feGaussianBlur stdDeviation="26"/></filter>
<linearGradient id="hairg" x1="0" y1="0" x2="0" y2="1"><stop offset="0" stop-color="#2a1c19"/><stop offset="0.6" stop-color="#33221c"/><stop offset="1" stop-color="#5a4233"/></linearGradient>
<radialGradient id="faceg" cx="0.42" cy="0.45" r="0.65"><stop offset="0" stop-color="#e9bba6"/><stop offset="0.6" stop-color="#d9a48f"/><stop offset="1" stop-color="#b98571"/></radialGradient>
<linearGradient id="jk" x1="0" y1="0" x2="1" y2="0"><stop offset="0" stop-color="#1c2f2b"/><stop offset="0.5" stop-color="#1a2a27"/><stop offset="1" stop-color="#15211f"/></linearGradient>
</defs>
<rect x="963" y="252" width="631" height="355" fill="#7fd0d4"/>
<g filter="url(#b25)">
<ellipse cx="978" cy="420" rx="50" ry="230" fill="#d6f0f1"/>
<ellipse cx="1040" cy="258" rx="110" ry="42" fill="#e4f5f6"/>
<ellipse cx="1130" cy="300" rx="60" ry="70" fill="#a5dfe1" opacity="0.8"/>
<ellipse cx="1230" cy="420" rx="110" ry="150" fill="#6fcacf"/>
<ellipse cx="1130" cy="520" rx="90" ry="80" fill="#63c5cb"/>
<ellipse cx="1290" cy="300" rx="60" ry="50" fill="#8fd6da" opacity="0.8"/>
<rect x="1500" y="252" width="110" height="355" fill="#c9ecee"/>
<ellipse cx="1460" cy="285" rx="50" ry="40" fill="#6ccad0"/>
<ellipse cx="1570" cy="285" rx="75" ry="75" fill="#ffffff"/>
<ellipse cx="1560" cy="600" rx="40" ry="40" fill="#8fd8dc"/>
</g>
<g filter="url(#b12)">
<ellipse cx="1520" cy="560" rx="40" ry="50" fill="#b5e4e7"/>
</g>
<g filter="url(#b5)">
<circle cx="1428" cy="438" r="104" fill="url(#disc)"/>
</g>
<g filter="url(#b1)">
<!-- hair back -->
<path d="M1345 283 C1315 283 1291 305 1290 345 C1289 362 1296 372 1300 378 C1303 400 1297 425 1291 440 C1300 452 1318 468 1332 472 L1420 478 C1430 470 1440 455 1438 444 C1428 420 1424 395 1420 372 C1424 355 1420 335 1416 325 C1405 298 1380 283 1345 283Z" fill="url(#hairg)"/>
<!-- neck -->
<path d="M1338 430 L1399 428 L1401 500 L1368 515 L1342 480Z" fill="#c99580"/>
<path d="M1398 426 L1414 436 L1416 500 L1400 506Z" fill="#3c2a22"/>
<!-- black top -->
<path d="M1343 490 L1408 486 L1410 607 L1376 607 L1356 555Z" fill="#0b0b0d"/>
<path d="M1347 470 Q1370 500 1400 480 L1402 497 L1346 497Z" fill="#d3a08b"/>
<!-- jacket torso -->
<path d="M1258 452 C1275 440 1300 436 1318 440 L1338 452 L1348 492 L1362 545 L1382 607 L1272 607 C1262 570 1250 500 1258 452Z" fill="url(#jk)"/>
<path d="M1402 462 L1420 452 C1440 455 1462 466 1472 478 C1480 520 1486 570 1488 607 L1400 607 L1404 500Z" fill="#17241f"/>
<!-- lapel shading -->
<path d="M1338 452 L1348 492 L1382 607 L1372 607 L1330 500 L1318 470Z" fill="#111c1a"/>
<path d="M1404 500 L1402 607 L1410 607 L1418 530 L1440 515 L1425 505 L1432 480 L1410 462Z" fill="#0f1917"/>
<!-- arm -->
<path d="M1262 450 C1240 462 1215 490 1190 520 C1170 543 1155 558 1151 570 C1148 584 1154 596 1166 600 L1262 607 L1290 607 L1292 585 C1270 580 1250 580 1240 575 L1268 545 L1272 470Z" fill="#1b2c28"/>
<!-- gap -->
<path d="M1240 549 C1250 541 1266 540 1276 546 C1280 560 1276 580 1270 590 C1258 588 1246 584 1238 576 C1235 566 1236 556 1240 549Z" fill="#76cdd1"/>
<!-- hand -->
<path d="M1258 600 Q1275 588 1296 594 L1300 607 L1256 607Z" fill="#cf9c88"/>
<!-- face -->
<path d="M1304 350 C1303 320 1325 308 1352 309 C1385 309 1408 325 1409 358 C1411 390 1404 420 1385 438 C1372 450 1352 450 1340 440 C1318 424 1306 390 1304 350Z" fill="url(#faceg)"/>
<ellipse cx="1372" cy="448" rx="30" ry="9" fill="#a87662" opacity="0.55" filter="url(#b3)"/>
<ellipse cx="1392" cy="395" rx="10" ry="30" fill="#c08c78" opacity="0.5" filter="url(#b3)"/>
<!-- hair front strands -->
<path d="M1345 284 C1318 286 1294 310 1292 350 C1295 368 1300 374 1304 372 C1302 340 1312 318 1340 306 C1365 300 1390 308 1404 330 C1410 345 1410 360 1412 372 C1420 360 1420 338 1414 322 C1402 296 1378 283 1345 284Z" fill="#2b1d19"/>
<!-- ear -->
<ellipse cx="1406" cy="366" rx="5" ry="11" fill="#d09a86"/>
<circle cx="1405.500" cy="389" r="2.300" fill="#f1d9d0"/><circle cx="1312" cy="410" r="2" fill="#e8cabc"/>
<!-- brows, eyes -->
<path d="M1308 352 Q1318 345 1330 349" stroke="#3d2620" stroke-width="2.600" fill="none"/>
<path d="M1352 341 Q1366 333 1382 338" stroke="#3d2620" stroke-width="2.800" fill="none"/>
<ellipse cx="1319" cy="359" rx="6.500" ry="3" fill="#2e1e1b"/>
<ellipse cx="1366" cy="349.500" rx="7" ry="3.200" fill="#2e1e1b"/>
<!-- nose -->
<path d="M1340 362 Q1336 380 1342 384 Q1350 388 1358 380" stroke="#b9826f" stroke-width="2" fill="none"/>
<!-- lips -->
<path d="M1338 402 Q1348 394 1356 397 Q1366 394 1372 400 Q1360 410 1350 410 Q1342 409 1338 402Z" fill="#a8434c"/>
<path d="M1342 402 Q1354 400 1368 400 Q1356 406 1342 402Z" fill="#5a1f26"/>
<!-- necklace -->
<path d="M1398 502 Q1385 535 1362 556" stroke="#c99a6a" stroke-width="1.200" fill="none"/>
</g>
</svg>
<div class="abs" style="left:8px;top:8px;width:157px;height:24px;border-radius:5px;background:rgba(62,70,70,0.95)"></div>
<svg class="abs" style="left:18px;top:13px" width="12" height="14" viewBox="0 0 12 14"><path d="M3 1 H9 V2.400 H8 V6.200 L10 8.200 V9.200 H6.600 V13 L6 13.800 L5.400 13 V9.200 H2 V8.200 L4 6.200 V2.400 H3Z" fill="#f2f2f2"/></svg>
<div class="bt" style="left:38px;top:13px;font-size:12.500px;color:#f4f4f4;letter-spacing:-0.427px" id="pin">Удалить закрепление</div>
<div class="abs" style="left:1px;top:336px;width:220px;height:19px;border-radius:4px;background:rgba(66,84,86,0.86)"></div>
<svg class="abs" style="left:2px;top:339px" width="16" height="14" viewBox="0 0 16 14"><g fill="#f2f2f2"><rect x="1.400" y="9" width="2.200" height="4"/><rect x="5" y="6.400" width="2.200" height="6.600"/><rect x="8.600" y="3.600" width="2.200" height="9.400"/><rect x="12.200" y="1" width="2.200" height="12"/></g></svg>
<div class="bt" style="left:22px;top:338px;font-size:13px;color:#fafafa;letter-spacing:0.001px" id="nm">Світлана Миколаївна Цимбалюк</div>
</div>
<!--MISC-->
<div class="abs" style="left:26px;top:703px;width:32px;height:32px;border-radius:50%;background:#27272a"></div>
<svg class="abs" style="left:33px;top:709px" width="18" height="20" viewBox="0 0 18 20"><path d="M12.400 2.200 L15.800 5.600 L6.800 14.600 H2.400 V10.200Z M10.600 4 L14 7.400" fill="none" stroke="#12e589" stroke-width="1.300" stroke-linejoin="round"/><path d="M2.200 17.400 H15.800" stroke="#12e589" stroke-width="1.400"/></svg>
<div class="abs" style="left:955.500px;top:442px;width:1.500px;height:28px;background:#8a8a8a"></div>
<div class="abs" style="left:958.500px;top:442px;width:1.500px;height:28px;background:#8a8a8a"></div>
<!--TOOLBAR-->
<div id="toolbar" class="abs">
<svg class="abs" style="left:39.0px;top:9.5px" width="26" height="26" viewBox="0 0 26 26" ><rect x="9.600" y="1.800" width="6.800" height="13" rx="3.400" fill="none" stroke="#f4f4f4" stroke-width="1.5" stroke-linecap="round" stroke-linejoin="round"/><path d="M6 11.600 V12.400 A7 7 0 0 0 20 12.400 V11.600 M13 19.400 V23.400 M9.400 23.600 H16.600" fill="none" stroke="#f4f4f4" stroke-width="1.5" stroke-linecap="round" stroke-linejoin="round"/><path d="M1.800 24.600 L24.800 1.600" stroke="#000" stroke-width="4.500"/><path d="M1.800 24.600 L24.800 1.600" stroke="#f0255d" stroke-width="2" stroke-linecap="round"/></svg>
<svg class="abs" style="left:79.0px;top:19.0px" width="10" height="6" viewBox="0 0 10 6" ><path d="M1.4 4.8 L5 1.4 L8.600 4.800" fill="none" stroke="#c4c4c4" stroke-width="1.300"/></svg>
<svg class="abs" style="left:131.0px;top:9.5px" width="28" height="26" viewBox="0 0 28 26" ><rect x="2" y="6.200" width="16" height="13.600" rx="3" fill="none" stroke="#f4f4f4" stroke-width="1.5" stroke-linecap="round" stroke-linejoin="round"/><path d="M18.600 11.600 L24.800 7.600 V18.400 L18.600 14.400" fill="none" stroke="#f4f4f4" stroke-width="1.5" stroke-linecap="round" stroke-linejoin="round"/><path d="M2 24.600 L25.400 1.600" stroke="#000" stroke-width="4.500"/><path d="M2 24.600 L25.400 1.600" stroke="#f0255d" stroke-width="2" stroke-linecap="round"/></svg>
<svg class="abs" style="left:177.0px;top:19.0px" width="10" height="6" viewBox="0 0 10 6" ><path d="M1.4 4.8 L5 1.4 L8.600 4.800" fill="none" stroke="#c4c4c4" stroke-width="1.300"/></svg>
<svg class="abs" style="left:562.4px;top:12.7px" width="20" height="20" viewBox="0 0 20 20" ><circle cx="7.400" cy="4.800" r="3.300" fill="none" stroke="#f4f4f4" stroke-width="1.5" stroke-linecap="round" stroke-linejoin="round"/><circle cx="15.200" cy="7.600" r="2.500" fill="none" stroke="#f4f4f4" stroke-width="1.5" stroke-linecap="round" stroke-linejoin="round"/><path d="M1.400 16.200 Q1.400 11.400 7.400 11.400 Q10.400 11.400 12 12.800 M1.400 16.200 Q1.400 18.600 4 18.600 H9.200" fill="none" stroke="#f4f4f4" stroke-width="1.5" stroke-linecap="round" stroke-linejoin="round"/><path d="M10.800 16.600 Q10.800 13 15.200 13 Q19.200 13 19.200 16.200 Q19.200 18.600 17 18.600 H13 Q10.800 18.600 10.800 16.600Z" fill="none" stroke="#f4f4f4" stroke-width="1.5" stroke-linecap="round" stroke-linejoin="round"/></svg>
<svg class="abs" style="left:620.0px;top:19.0px" width="10" height="6" viewBox="0 0 10 6" ><path d="M1.4 4.8 L5 1.4 L8.600 4.800" fill="none" stroke="#c4c4c4" stroke-width="1.300"/></svg>
<svg class="abs" style="left:668.9px;top:14.0px" width="21" height="20" viewBox="0 0 21 20" ><path d="M5.600 4.200 Q5.600 1.400 8.600 1.400 H16 Q19.600 1.400 19.600 5 V8 Q19.600 10.600 17.400 11" fill="none" stroke="#f4f4f4" stroke-width="1.5" stroke-linecap="round" stroke-linejoin="round"/><path d="M1.400 9 Q1.400 5.400 5 5.400 H12 Q15.600 5.400 15.600 9 V12 Q15.600 15.600 12 15.600 H8 L4.400 18.600 V15.500 Q1.400 15 1.400 12Z" fill="none" stroke="#f4f4f4" stroke-width="1.5" stroke-linecap="round" stroke-linejoin="round"/><circle cx="5.400" cy="10.500" r="1" fill="#f4f4f4"/><circle cx="8.500" cy="10.500" r="1" fill="#f4f4f4"/><circle cx="11.600" cy="10.500" r="1" fill="#f4f4f4"/></svg>
<div class="abs" style="left:685.500px;top:8.500px;width:16px;height:16px;border-radius:50%;background:#f0354b;border:1px solid #000;color:#fff;font-size:11px;line-height:14px;text-align:center">2</div><svg class="abs" style="left:710.0px;top:19.0px" width="10" height="6" viewBox="0 0 10 6" ><path d="M1.4 4.8 L5 1.4 L8.600 4.800" fill="none" stroke="#c4c4c4" stroke-width="1.300"/></svg>
<svg class="abs" style="left:763.2px;top:10.3px" width="26" height="23" viewBox="0 0 26 23" ><path d="M13 21.400 L3.200 11.400 Q-0.200 6.800 3.400 3.200 Q8 -0.400 13 5.200 Q18 -0.400 22.600 3.200 Q26.200 6.800 22.800 11.400Z" fill="none" stroke="#f4f4f4" stroke-width="1.5" stroke-linecap="round" stroke-linejoin="round" transform="rotate(-8 13 12)"/></svg>
<svg class="abs" style="left:809.0px;top:19.0px" width="10" height="6" viewBox="0 0 10 6" ><path d="M1.4 4.8 L5 1.4 L8.600 4.800" fill="none" stroke="#c4c4c4" stroke-width="1.300"/></svg>
<div class="abs" style="left:863px;top:12px;width:24px;height:19.500px;border-radius:4px;background:#0ee88c"></div><svg class="abs" style="left:869.0px;top:15.7px" width="12" height="12" viewBox="0 0 12 12" ><path d="M6 10.600 V2.400 M2.200 6 L6 2 L9.800 6" fill="none" stroke="#05130c" stroke-width="2.200"/></svg>
<svg class="abs" style="left:956.7px;top:11.0px" width="23" height="22" viewBox="0 0 23 22" ><circle cx="16.600" cy="5.200" r="3.700" fill="none" stroke="#f4f4f4" stroke-width="1.5" stroke-linecap="round" stroke-linejoin="round"/><circle cx="5.600" cy="16.600" r="3.700" fill="none" stroke="#f4f4f4" stroke-width="1.5" stroke-linecap="round" stroke-linejoin="round"/><path d="M1.800 8.600 V5.400 Q1.800 1.800 5.400 1.800 H9 M21.200 12.400 V16 Q21.200 20.200 17 20.200 H13.400" fill="none" stroke="#f4f4f4" stroke-width="1.5" stroke-linecap="round" stroke-linejoin="round"/></svg>
<svg class="abs" style="left:1041.0px;top:10.0px" width="24" height="24" viewBox="0 0 24 24" ><circle cx="12" cy="12" r="10.400" fill="none" stroke="#f4f4f4" stroke-width="1.5" stroke-linecap="round" stroke-linejoin="round"/><circle cx="12" cy="12" r="4.300" fill="#f4f4f4"/></svg>
<svg class="abs" style="left:1133.0px;top:9.7px" width="24" height="24" viewBox="0 0 24 24" ><circle cx="12" cy="12" r="10.600" fill="none" stroke="#f4f4f4" stroke-width="1.5" stroke-linecap="round" stroke-linejoin="round"/><circle cx="7.200" cy="12" r="1.200" fill="#f4f4f4"/><circle cx="12" cy="12" r="1.200" fill="#f4f4f4"/><circle cx="16.800" cy="12" r="1.200" fill="#f4f4f4"/></svg>
<svg class="abs" style="left:1538px;top:7px" width="30" height="30" viewBox="1538 818 30 30"><path d="M1549 821.300 H1563.900 V840.300 L1557 844.400 V826.600 L1563.900 821.300" fill="none" stroke="#f5145e" stroke-width="1.600" stroke-linejoin="round"/><circle cx="1549" cy="826.400" r="3" fill="#000" stroke="#f6f6f6" stroke-width="1.400"/><path d="M1546 830.500 L1542.200 833 Q1541 834.500 1542.600 835.600 L1545.400 834.200 L1544.800 838 L1541.600 842.400 Q1541.200 844.800 1543.600 844.400 L1547.400 839.800 L1549.200 841.600 L1549.600 844 Q1550.800 845.400 1552.200 844 L1551.800 840.400 L1549.800 837.400 L1550.400 834.800 L1553.200 836.200 Q1555 835.600 1554.400 834 L1550.800 831.200 Q1548.600 829.800 1546 830.500Z" fill="#000" stroke="#f6f6f6" stroke-width="1.400" stroke-linejoin="round"/></svg>
<div class="lbl" style="left:52.0px;letter-spacing:0.020px" id="lb1">Звук</div>
<div class="lbl" style="left:145.0px;letter-spacing:-0.441px" id="lb2">Видео</div>
<div class="lbl" style="left:572.0px;letter-spacing:-0.134px" id="lb3">Участники</div>
<div class="lbl" style="left:681.5px;letter-spacing:-0.688px" id="lb4">Чат</div>
<div class="lbl" style="left:776.5px;letter-spacing:-0.262px" id="lb5">Отреагировать</div>
<div class="lbl" style="left:875.2px;letter-spacing:-0.292px" id="lb6">Поделиться</div>
<div class="lbl" style="left:968.7px;letter-spacing:0.000px" id="lb7">Приложения</div>
<div class="lbl" style="left:1052.5px;letter-spacing:-0.279px" id="lb8">Запись</div>
<div class="lbl" style="left:1145.5px;letter-spacing:-0.014px" id="lb9">Дополнительно</div>
<div class="lbl" style="left:1551.5px;letter-spacing:-0.341px" id="lb10">Выйти</div>
<div class="bt" style="left:588.500px;top:12.500px;font-size:12.500px;color:#d0d0d0;letter-spacing:-1.203px" id="n31">31</div><div class="abs" style="left:611px;top:57px;width:455px;height:1.500px;background:#e6e6e6"></div></div>
<!--TASKBAR-->
<div id="taskbar" class="abs">
<div class="abs" style="left:152px;top:29px;width:152px;height:2px;background:#f3d6b5"></div><div class="abs" style="left:387px;top:0;width:157px;height:31px;background:#2c302e"></div><div class="abs" style="left:387.500px;top:29px;width:152px;height:2px;background:#f3d6b5"></div><div class="abs" style="left:544px;top:0;width:160px;height:31px;background:#ad6328"></div><div class="abs" style="left:544px;top:29px;width:160px;height:2px;background:#f78320"></div><div class="abs" style="left:704px;top:0;width:160px;height:31px;background:linear-gradient(90deg,#55504c 0,#8b8783 45%,#7a7571 70%,#5f5a57 100%)"></div><div class="abs" style="left:704px;top:29px;width:160px;height:2px;background:#f3d6b5"></div><div class="abs" style="left:869.500px;top:29px;width:151px;height:2px;background:#f3d6b5"></div><svg class="abs" style="left:10.0px;top:8.0px" width="16" height="16" viewBox="0 0 16 16" ><path d="M0 2.400 L6.800 1.400 V7.600 H0Z M7.800 1.300 L16 0 V7.600 H7.800Z M0 8.600 H6.800 V14.800 L0 13.800Z M7.800 8.600 H16 V16.200 L7.800 14.900Z" fill="#fff"/></svg>
<svg class="abs" style="left:45.5px;top:8.0px" width="16" height="16" viewBox="0 0 16 16" ><circle cx="9.800" cy="6.200" r="5" fill="none" stroke="#fff" stroke-width="1.400"/><path d="M6.200 9.800 L0.800 15.200" stroke="#fff" stroke-width="1.600"/></svg>
<svg class="abs" style="left:81.5px;top:8.5px" width="17" height="15" viewBox="0 0 17 15" ><rect x="3" y="3.600" width="8.600" height="7.600" fill="none" stroke="#fff" stroke-width="1.300"/><path d="M0.600 1 V3 M0.600 1 H11.600 M0.600 14 V12 M0.600 14 H11.600 M14 1 V3.600 M14 6 V9 M14 11.400 V14 M14 1 H16.600 M14 14 H16.600 M16 6 V9" stroke="#fff" stroke-width="1.200" fill="none"/></svg>
<svg class="abs" style="left:120.5px;top:7.5px" width="17" height="17" viewBox="0 0 17 17" ><defs><linearGradient id="eg" x1="0" y1="0" x2="1" y2="1"><stop offset="0" stop-color="#35c1f1"/><stop offset="0.5" stop-color="#1b9de2"/><stop offset="1" stop-color="#0c59a4"/></linearGradient></defs><circle cx="8.500" cy="8.500" r="8" fill="url(#eg)"/><path d="M1 10 Q2 3 9 3.400 Q15 4 15.600 9.400 Q15.400 12 12.400 12 Q9.600 11.800 10 9.600 Q10.200 8 8.400 7.800 Q5.600 8 5.600 11 Q6 15 10.400 16 Q3 17.400 1 10Z" fill="#5be06a" opacity="0.85"/><path d="M5.800 10.400 Q6 7.600 8.800 7.800 Q10.400 8.200 10 9.800 Q9.600 12 12.600 12 Q9.800 14.800 7 13.400 Q5.600 12.400 5.800 10.400Z" fill="#0b4a8f"/></svg>
<svg class="abs" style="left:157.5px;top:8.5px" width="14" height="16" viewBox="0 0 14 16" ><path d="M0.600 0.600 H10.600 V3 H13.400 V15.400 H0.600Z" fill="#f6d26f"/><path d="M10.600 0.600 V10 H13.400 V15.400 H10.600Z" fill="#e9b84d"/><path d="M0.600 0.600 H10.600 V15.400 H0.600Z" fill="#fbe08a"/></svg>
<div class="tk" style="left:176px;letter-spacing:-0.953px" id="k2024">2024</div><svg class="abs" style="left:318.8px;top:8.5px" width="16" height="16" viewBox="0 0 16 16" ><path d="M1 4.200 H15 V13.600 Q15 15.400 13.200 15.400 H2.800 Q1 15.400 1 13.600Z" fill="#f4f4f4"/><path d="M5 4 V2.600 Q5 1 6.600 1 H9.400 Q11 1 11 2.600 V4" fill="none" stroke="#3fa3e8" stroke-width="1.200"/><rect x="4.400" y="6.400" width="3.200" height="3.200" fill="#f25022"/><rect x="8.400" y="6.400" width="3.200" height="3.200" fill="#7fba00"/><rect x="4.400" y="10.400" width="3.200" height="3.200" fill="#00a4ef"/><rect x="8.400" y="10.400" width="3.200" height="3.200" fill="#ffb900"/></svg>
<svg class="abs" style="left:355.7px;top:8.0px" width="16" height="16" viewBox="0 0 16 16" ><circle cx="8" cy="8" r="7.600" fill="#f59a23"/><path d="M1 5 Q8 -3 15 5 Q15.400 10 12 13 Q6 10 1 5Z" fill="#7a3fc8"/><path d="M8 3.400 L11.600 4.800 V8.600 Q11.400 11.400 8 12.800 Q4.600 11.400 4.400 8.600 V4.800Z" fill="#fff"/><circle cx="8" cy="7.400" r="1.300" fill="#5a3aa0"/><path d="M7.400 8 H8.600 V10.400 H7.400Z" fill="#5a3aa0"/></svg>
<svg class="abs" style="left:390.5px;top:8.0px" width="16" height="16" viewBox="0 0 16 16" ><circle cx="8" cy="8" r="7.600" fill="#e33b2e"/><path d="M8 8 L1.400 4.200 A7.600 7.600 0 0 0 4.200 14.600Z" fill="#2da94f"/><path d="M8 8 L4.200 14.600 A7.600 7.600 0 0 0 14.600 4.200 L8 4.200Z" fill="#fbc116"/><path d="M1.400 4.200 A7.600 7.600 0 0 1 14.600 4.200 H8Z" fill="#e33b2e"/><circle cx="8" cy="8" r="3.500" fill="#fff"/><circle cx="8" cy="8" r="2.700" fill="#3f7fe8"/><circle cx="12.200" cy="12.400" r="3.200" fill="#cfe3f6"/><circle cx="12.200" cy="11.400" r="1.100" fill="#4a78b0"/><path d="M10.400 14.200 Q12.200 11.800 14 14.200Z" fill="#4a78b0"/></svg>
<div class="tk" style="left:411px;letter-spacing:-0.406px" id="kvh">Вхідні (1 385) - m.koz...</div><svg class="abs" style="left:552.0px;top:7.6px" width="16" height="16" viewBox="0 0 16 16" ><rect x="0.500" y="0.500" width="15" height="15" rx="4.600" fill="#0b5cff"/><text x="8" y="10.600" font-family="Liberation Sans" font-size="7" font-weight="bold" fill="#fff" text-anchor="middle">zm</text></svg>
<div class="tk" style="left:572px;letter-spacing:-0.232px" id="kzw">Zoom Workplace</div><svg class="abs" style="left:712.0px;top:7.6px" width="16" height="16" viewBox="0 0 16 16" ><rect x="0.500" y="0.500" width="15" height="15" rx="4.600" fill="#0b5cff"/><text x="8" y="10.600" font-family="Liberation Sans" font-size="7" font-weight="bold" fill="#fff" text-anchor="middle">zm</text></svg>
<div class="tk" style="left:732px;letter-spacing:-0.313px" id="kzk">Zoom Конференция</div><svg class="abs" style="left:873.5px;top:8.5px" width="15" height="15" viewBox="0 0 15 15" ><rect x="0.700" y="0.700" width="13.600" height="13.600" rx="1.500" fill="#d24726" stroke="#f7f1ee" stroke-width="1.200"/><path d="M5 3.600 H8.200 Q10.800 3.600 10.800 6.200 Q10.800 8.800 8.200 8.800 H6.600 V11.800 H5Z M6.600 5 V7.400 H8 Q9.200 7.400 9.200 6.200 Q9.200 5 8 5Z" fill="#fff"/></svg>
<div class="tk" style="left:893px;letter-spacing:-0.468px" id="kpp">Презентація_9_Грінч...</div><div class="tk" style="left:1151.500px;top:7.500px;font-size:11.500px;color:#e8e8e8;letter-spacing:-0.742px" id="kuk">UK</div><svg class="abs" style="left:1179.5px;top:7.1px" width="17" height="17" viewBox="0 0 17 17" ><circle cx="8.500" cy="8.500" r="8" fill="#0b5cff"/><text x="8.500" y="11" font-family="Liberation Sans" font-size="7" font-weight="bold" fill="#fff" text-anchor="middle">zm</text></svg>
<svg class="abs" style="left:1205.5px;top:7.0px" width="12" height="18" viewBox="0 0 12 18" ><rect x="3" y="0.800" width="6" height="10.800" rx="3" fill="#f4f4f4"/><path d="M1 8.400 V9.200 Q1 14 6 14 Q11 14 11 9.200 V8.400 M6 14 V16.600 M3.400 17 H8.600" fill="none" stroke="#e6e6e6" stroke-width="1"/></svg>
<svg class="abs" style="left:1228.0px;top:8.5px" width="16" height="15" viewBox="0 0 16 15" ><rect x="1" y="0.800" width="14" height="10.400" fill="#5b7fc0" stroke="#dfe6f2" stroke-width="0.800"/><circle cx="8" cy="6" r="3.800" fill="none" stroke="#e01b24" stroke-width="1.500"/><path d="M5.400 3.400 L10.600 8.600" stroke="#e01b24" stroke-width="1.500"/><rect x="0.600" y="12.200" width="6.400" height="2.200" fill="#c9c9c9"/><rect x="9" y="12.200" width="6.400" height="2.200" fill="#c9c9c9"/></svg>
<svg class="abs" style="left:1251.7px;top:8.0px" width="16" height="16" viewBox="0 0 16 16" ><rect x="0" y="0" width="16" height="16" fill="#f5820d"/><rect x="3" y="3" width="9" height="9" rx="1.500" fill="none" stroke="#ffe3c2" stroke-width="1"/><circle cx="7.500" cy="7.500" r="2.200" fill="none" stroke="#ffe3c2" stroke-width="1"/></svg>
<svg class="abs" style="left:1276.0px;top:8.0px" width="16" height="16" viewBox="0 0 16 16" ><circle cx="8" cy="8" r="7.800" fill="#f57c14"/><path d="M3 11.600 L8 3.400 L13 11.600 L10.800 11 L8 6.400 L7 11.200 L5.200 9.800Z" fill="#fff"/></svg>
<svg class="abs" style="left:1300.0px;top:8.0px" width="16" height="16" viewBox="0 0 16 16" ><rect x="0" y="0" width="16" height="16" fill="#f5820d"/><path d="M4 11 L6 6.400 Q8.600 3 11.400 3.600 Q12 6.400 8.600 9 Z M4 11 L3.400 8.600 L5 8 M4 11 L6.400 11.600 L7 10" fill="none" stroke="#fff" stroke-width="1"/></svg>
<svg class="abs" style="left:1324.0px;top:8.0px" width="16" height="16" viewBox="0 0 16 16" ><rect x="0" y="0" width="16" height="16" fill="#2f86c6"/><path d="M0 9 Q7 6 15 10 V15 H0Z" fill="#8ecf6a"/><rect x="3" y="2.400" width="8" height="5.400" fill="#e8f2fa" stroke="#1d4f80" stroke-width="0.700"/><rect x="5" y="6.600" width="8" height="5.400" fill="#cfe4f4" stroke="#1d4f80" stroke-width="0.700"/></svg>
<svg class="abs" style="left:1350.6px;top:7.5px" width="10" height="17" viewBox="0 0 10 17" ><ellipse cx="5" cy="8.500" rx="4.800" ry="8.200" fill="#1f83e8"/><path d="M2.600 5.600 L7.200 10.800 L5 13 V4 L7.200 6.200 L2.600 11.400" fill="none" stroke="#fff" stroke-width="1"/></svg>
<svg class="abs" style="left:1371.6px;top:11.4px" width="16" height="10" viewBox="0 0 16 10" ><rect x="0.700" y="1.200" width="12.600" height="7.600" fill="none" stroke="#f0f0f0" stroke-width="1.200"/><rect x="13.800" y="3.400" width="1.600" height="3.200" fill="#f0f0f0"/><rect x="2.200" y="2.800" width="4" height="4.400" fill="#f0f0f0"/></svg>
<svg class="abs" style="left:1397.5px;top:10.0px" width="15" height="14" viewBox="0 0 15 14" ><path d="M1 12.600 A11.600 11.600 0 0 1 12.600 1" fill="none" stroke="#e8e8e8" stroke-width="1.200"/><path d="M4.400 12.600 A8.200 8.200 0 0 1 12.600 4.400" fill="none" stroke="#e8e8e8" stroke-width="1.200"/><path d="M7.800 12.600 A4.800 4.800 0 0 1 12.600 7.800" fill="none" stroke="#e8e8e8" stroke-width="1.200"/><circle cx="12" cy="12" r="1.300" fill="#e8e8e8"/></svg>
<svg class="abs" style="left:1418.5px;top:9.0px" width="18" height="14" viewBox="0 0 18 14" ><path d="M1 4.800 H3.800 L7.400 1.400 V12.600 L3.800 9.200 H1Z" fill="none" stroke="#f0f0f0" stroke-width="1.100" stroke-linejoin="round"/><path d="M9.600 4.600 Q11 7 9.600 9.400 M11.800 3 Q14 7 11.800 11 M14 1.400 Q17.200 7 14 12.600" fill="none" stroke="#f0f0f0" stroke-width="1.100"/></svg>
<svg class="abs" style="left:1446.9px;top:8.5px" width="17" height="15" viewBox="0 0 17 15" ><path d="M9.600 1.400 Q11.600 0 12.400 1.800 L8.400 12 L6.600 13.800 L6.400 11.200Z" fill="none" stroke="#f0f0f0" stroke-width="1.100"/><path d="M6 9 Q1.400 8.400 1.400 11.400 Q1.600 14 5 13.800 M10.600 7.400 Q15.600 5.600 15.400 8.400 Q15 10.400 12.400 10" fill="none" stroke="#f0f0f0" stroke-width="1.100"/></svg>
<div class="tk" style="left:1479px;font-size:12px;color:#f2f2f2;letter-spacing:-0.875px" id="kukr">УКР</div><div class="tk" style="left:1514.800px;font-size:12px;color:#f2f2f2;letter-spacing:-0.528px" id="ktime">11:13</div><svg class="abs" style="left:1558.7px;top:7.9px" width="17" height="17" viewBox="0 0 17 17" ><path d="M0.800 0.800 H16.200 V12.200 H11 L8.500 15.800 V12.200 H0.800Z" fill="#fff"/><path d="M3.600 4 H13.400 M3.600 6.600 H13.400 M3.600 9.200 H10" stroke="#1f2322" stroke-width="1"/></svg>
<div class="abs" style="left:1596px;top:3px;width:1px;height:28px;background:#6c6c6c"></div><div class="abs" style="left:0;top:0;width:1600px;height:1px;background:#000"></div></div>
</body></html>
